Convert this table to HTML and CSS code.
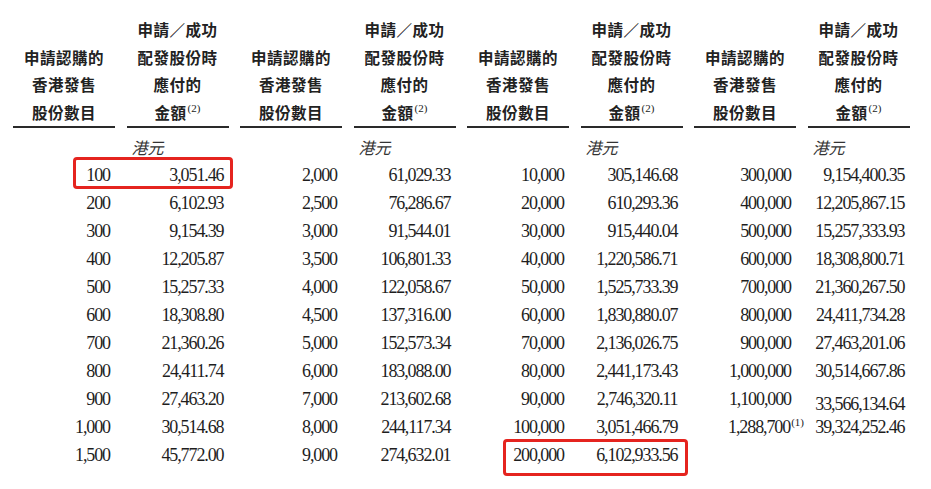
FILE: index.html
```html
<!DOCTYPE html>
<html lang="zh-Hant">
<head>
<meta charset="utf-8">
<title>申請認購表</title>
<link rel="stylesheet" href="styles.css">
</head>
<body>
<div class="page">
  <div class="table">
    <div class="hd"><span>申請認購的</span><span>香港發售</span><span>股份數目</span></div>
    <div class="hd"><span>申請／成功</span><span>配發股份時</span><span>應付的</span><span>金額<sup>(2)</sup></span></div>
    <div class="hd"><span>申請認購的</span><span>香港發售</span><span>股份數目</span></div>
    <div class="hd"><span>申請／成功</span><span>配發股份時</span><span>應付的</span><span>金額<sup>(2)</sup></span></div>
    <div class="hd"><span>申請認購的</span><span>香港發售</span><span>股份數目</span></div>
    <div class="hd"><span>申請／成功</span><span>配發股份時</span><span>應付的</span><span>金額<sup>(2)</sup></span></div>
    <div class="hd"><span>申請認購的</span><span>香港發售</span><span>股份數目</span></div>
    <div class="hd"><span>申請／成功</span><span>配發股份時</span><span>應付的</span><span>金額<sup>(2)</sup></span></div>

    <div class="cur"></div><div class="cur">港元</div>
    <div class="cur"></div><div class="cur">港元</div>
    <div class="cur"></div><div class="cur">港元</div>
    <div class="cur"></div><div class="cur">港元</div>

    <div class="n">100</div><div class="n">3,051.46</div><div class="n">2,000</div><div class="n">61,029.33</div><div class="n">10,000</div><div class="n">305,146.68</div><div class="n">300,000</div><div class="n">9,154,400.35</div>
    <div class="n">200</div><div class="n">6,102.93</div><div class="n">2,500</div><div class="n">76,286.67</div><div class="n">20,000</div><div class="n">610,293.36</div><div class="n">400,000</div><div class="n">12,205,867.15</div>
    <div class="n">300</div><div class="n">9,154.39</div><div class="n">3,000</div><div class="n">91,544.01</div><div class="n">30,000</div><div class="n">915,440.04</div><div class="n">500,000</div><div class="n">15,257,333.93</div>
    <div class="n">400</div><div class="n">12,205.87</div><div class="n">3,500</div><div class="n">106,801.33</div><div class="n">40,000</div><div class="n">1,220,586.71</div><div class="n">600,000</div><div class="n">18,308,800.71</div>
    <div class="n">500</div><div class="n">15,257.33</div><div class="n">4,000</div><div class="n">122,058.67</div><div class="n">50,000</div><div class="n">1,525,733.39</div><div class="n">700,000</div><div class="n">21,360,267.50</div>
    <div class="n">600</div><div class="n">18,308.80</div><div class="n">4,500</div><div class="n">137,316.00</div><div class="n">60,000</div><div class="n">1,830,880.07</div><div class="n">800,000</div><div class="n">24,411,734.28</div>
    <div class="n">700</div><div class="n">21,360.26</div><div class="n">5,000</div><div class="n">152,573.34</div><div class="n">70,000</div><div class="n">2,136,026.75</div><div class="n">900,000</div><div class="n">27,463,201.06</div>
    <div class="n">800</div><div class="n">24,411.74</div><div class="n">6,000</div><div class="n">183,088.00</div><div class="n">80,000</div><div class="n">2,441,173.43</div><div class="n">1,000,000</div><div class="n">30,514,667.86</div>
    <div class="n">900</div><div class="n">27,463.20</div><div class="n">7,000</div><div class="n">213,602.68</div><div class="n">90,000</div><div class="n">2,746,320.11</div><div class="n">1,100,000</div><div class="n drop">33,566,134.64</div>
    <div class="n">1,000</div><div class="n">30,514.68</div><div class="n">8,000</div><div class="n">244,117.34</div><div class="n">100,000</div><div class="n">3,051,466.79</div><div class="n fn">1,288,700<sup>(1)</sup></div><div class="n">39,324,252.46</div>
    <div class="n">1,500</div><div class="n">45,772.00</div><div class="n">9,000</div><div class="n">274,632.01</div><div class="n">200,000</div><div class="n">6,102,933.56</div><div class="n"></div><div class="n"></div>
  </div>
  <div class="mark mark-a"></div>
  <div class="mark mark-b"></div>
</div>
</body>
</html>
```

FILE: styles.css
```css
html, body {
  margin: 0;
  padding: 0;
  background: #ffffff;
}

.page {
  position: relative;
  width: 931px;
  height: 489px;
  overflow: hidden;
}

.table {
  display: grid;
  grid-template-columns: repeat(8, 102px);
  column-gap: 11.5px;
  padding: 16px 0 0 13px;
  color: #1e1e1e;
}

.hd {
  display: flex;
  flex-direction: column;
  justify-content: flex-end;
  align-items: center;
  border-bottom: 2px solid #2a2a2a;
  font-family: "Noto Sans CJK TC", "Noto Sans CJK SC", sans-serif;
  font-weight: 700;
  font-size: 15.5px;
  letter-spacing: 0.5px;
  line-height: 27.5px;
  height: 110px;
  color: #222;
}

.hd span {
  display: block;
  white-space: nowrap;
}

.hd sup, .fn sup {
  font-family: "Liberation Serif", serif;
  font-weight: 400;
  font-size: 11px;
  letter-spacing: 0;
  line-height: 0;
  vertical-align: 7px;
  margin-left: 1px;
  color: #222;
}

.cur {
  margin-top: 5px;
  height: 28px;
  line-height: 28px;
  padding-left: 5px;
  font-family: "Noto Sans CJK TC", "Noto Sans CJK SC", sans-serif;
  font-style: italic;
  font-weight: 400;
  font-size: 16px;
  color: #333;
}

.n {
  height: 28px;
  line-height: 28px;
  text-align: right;
  padding-right: 5px;
  font-family: "Liberation Serif", "Times New Roman", serif;
  font-size: 18px;
  letter-spacing: -1.1px;
  white-space: nowrap;
  color: #1e1e1e;
}

.n.drop {
  line-height: 38px;
}

.n.fn {
  padding-right: 0;
  margin-right: -8px;
}

.mark {
  position: absolute;
  border: 3px solid #e5241f;
  border-radius: 4px;
  box-sizing: border-box;
}

.mark-a {
  left: 73px;
  top: 157px;
  width: 160px;
  height: 32px;
}

.mark-b {
  left: 503px;
  top: 439px;
  width: 185px;
  height: 37px;
}
```
